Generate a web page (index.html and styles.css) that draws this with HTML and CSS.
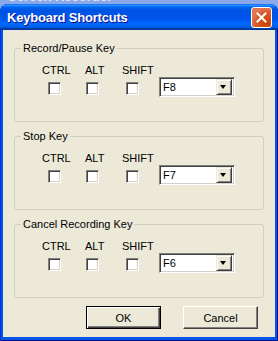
FILE: index.html
```html
<!DOCTYPE html>
<html lang="en">
<head>
    <meta charset="UTF-8">
    <title>Keyboard Shortcuts</title>
    <link rel="stylesheet" href="styles.css">
</head>
<body>
    <div class="backdrop"><span>Screen Recorder</span></div>
    <div class="window">
        <div class="titlebar">
            <span class="title">Keyboard Shortcuts</span>
            <span class="close">
                <svg width="11" height="11" viewBox="0 0 11 11"><path d="M1.5 1.5 L9.5 9.5 M9.5 1.5 L1.5 9.5" stroke="#fff" stroke-width="2" stroke-linecap="square"/></svg>
            </span>
        </div>
        <div class="client">
            <fieldset class="group">
                <legend>Record/Pause Key</legend>
                <div class="keys">
                    <span class="lbl">CTRL</span>
                    <span class="lbl">ALT</span>
                    <span class="lbl">SHIFT</span>
                    <span class="check k1"></span>
                    <span class="check k2"></span>
                    <span class="check k3"></span>
                    <div class="combo"><span class="val">F8</span><span class="drop"></span></div>
                </div>
            </fieldset>
            <fieldset class="group">
                <legend>Stop Key</legend>
                <div class="keys">
                    <span class="lbl">CTRL</span>
                    <span class="lbl">ALT</span>
                    <span class="lbl">SHIFT</span>
                    <span class="check k1"></span>
                    <span class="check k2"></span>
                    <span class="check k3"></span>
                    <div class="combo"><span class="val">F7</span><span class="drop"></span></div>
                </div>
            </fieldset>
            <fieldset class="group">
                <legend>Cancel Recording Key</legend>
                <div class="keys">
                    <span class="lbl">CTRL</span>
                    <span class="lbl">ALT</span>
                    <span class="lbl">SHIFT</span>
                    <span class="check k1"></span>
                    <span class="check k2"></span>
                    <span class="check k3"></span>
                    <div class="combo"><span class="val">F6</span><span class="drop"></span></div>
                </div>
            </fieldset>
            <div class="buttons">
                <button class="btn default">OK</button>
                <button class="btn">Cancel</button>
            </div>
        </div>
    </div>
</body>
</html>
```

FILE: styles.css
```css
body { margin: 0; width: 278px; height: 341px; overflow: hidden; background: #8ba8ea; font-family: "Liberation Sans", Arial, sans-serif; font-size: 11px; color: #000; }

.backdrop { height: 4px; overflow: hidden; padding-left: 8px; }
.backdrop span { display: block; margin-top: -10px; font-weight: bold; font-size: 13px; line-height: 14px; color: #dde6fa; }

.window { height: 337px; display: flex; flex-direction: column; background: #0054e3; border-radius: 8px 8px 0 0; box-shadow: inset 1px 0 #0831d9, inset -1px -1px #00138c; }

.titlebar { height: 26px; display: flex; align-items: center; justify-content: space-between; padding: 0 6px 0 7px; border-radius: 8px 8px 0 0;
    background: linear-gradient(#0058ee 0%, #3593ff 4%, #288eff 6%, #127dff 8%, #036ffc 10%, #0262ee 14%, #0057e5 20%, #0054e3 24%, #0055eb 56%, #005bf5 66%, #026afe 76%, #0062ef 86%, #0052d6 92%, #0040ab 94%, #003092 100%); }
.title { color: #fff; font-weight: bold; font-size: 13px; letter-spacing: -0.2px; text-shadow: 1px 1px #0f1089; margin-top: 1px; }
.close { width: 19px; height: 19px; display: flex; align-items: center; justify-content: center; border: 1px solid #fff; border-radius: 3px; margin-top: 1px;
    background-color: #da5a32; background-image: radial-gradient(circle at 80% 80%, #c94300 0%, #d9582a 50%, #e37a55 75%, #e06a45 100%); }

.client { flex: 1; margin: 0 3px 4px; background: #ece9d8; padding: 12px 11px 0; display: flex; flex-direction: column; }

.group { margin: 0 0 8px; padding: 9px 0 24px; border: 1px solid #d0d0bf; border-radius: 3px; min-inline-size: 0; }
.group legend { margin-left: 6px; padding: 0 2px; line-height: 13px; }

.keys { display: grid; grid-template-columns: 43px 37px 37px 76px; grid-template-rows: 13px 20px; padding-left: 27px; align-items: start; }
.lbl { line-height: 13px; grid-row: 1; }
.check { grid-row: 2; width: 13px; height: 13px; box-sizing: border-box; margin-top: 5px; background: #fff; border: 1px solid; border-color: #808080 #fff #fff #808080; box-shadow: inset 1px 1px #404040, inset -1px -1px #d4d0c8; }
.k1 { grid-column: 1; margin-left: 6px; }
.k2 { grid-column: 2; margin-left: 1px; }
.k3 { grid-column: 3; margin-left: 4px; }

.combo { grid-row: 2; grid-column: 4; height: 20px; box-sizing: border-box; display: flex; align-items: center; background: #fff; border: 1px solid; border-color: #808080 #fff #fff #808080; box-shadow: inset 1px 1px #404040, inset -1px -1px #d4d0c8; padding: 2px; }
.combo .val { flex: 1; padding-left: 1px; }
.drop { width: 16px; height: 16px; box-sizing: border-box; background: #ece9d8; border: 1px solid; border-color: #ece9d8 #404040 #404040 #ece9d8; box-shadow: inset 1px 1px #fff, inset -1px -1px #808080; position: relative; }
.drop::after { content: ""; position: absolute; left: 3px; top: 5px; border-style: solid; border-width: 4px 3.5px 0; border-color: #000 transparent transparent; }

.buttons { display: flex; justify-content: flex-end; gap: 22px; padding: 0 6px 0 0; }
.btn { width: 75px; height: 23px; font-family: inherit; font-size: 11px; color: #000; background: #ece9d8; border: 1px solid; border-color: #fff #404040 #404040 #fff; box-shadow: inset -1px -1px #808080; padding: 0; }
.btn.default { border-color: #000; box-shadow: inset 1px 1px #fff, inset -1px -1px #404040, inset -2px -2px #808080; }
```
